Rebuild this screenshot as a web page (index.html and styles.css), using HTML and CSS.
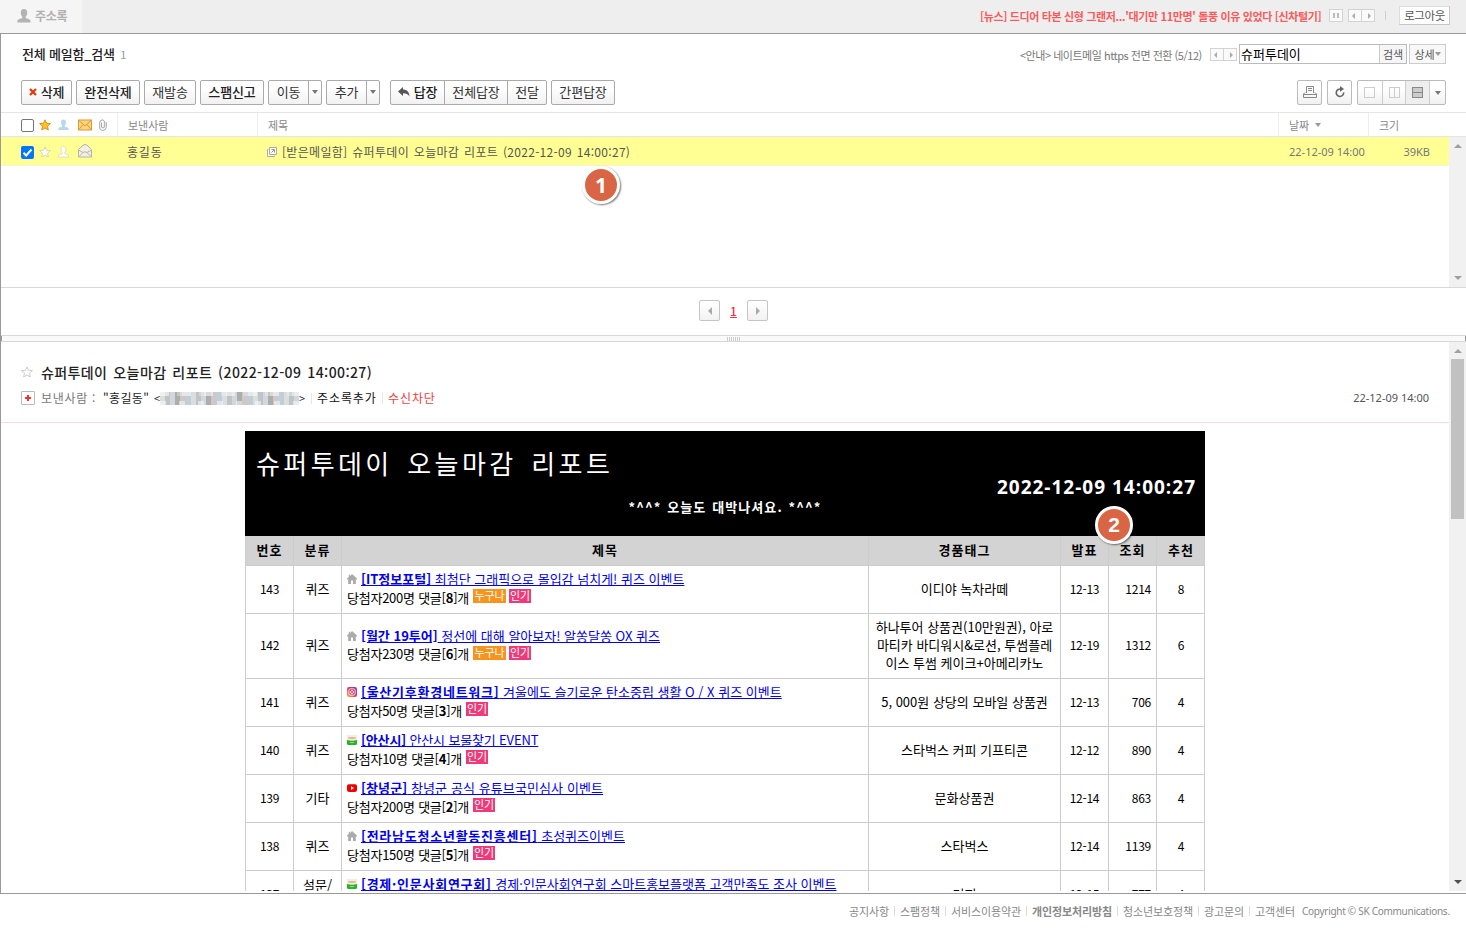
FILE: index.html
```html
<!DOCTYPE html>
<html lang="ko">
<head>
<meta charset="utf-8">
<title>메일</title>
<link rel="stylesheet" href="styles.css">
</head>
<body>
<svg class="defs" width="0" height="0">
  <symbol id="star" viewBox="0 0 12 12"><path d="M6 .8 7.5 4.2 11.4 4.6 8.5 7.2 9.3 11 6 9 2.7 11 3.5 7.2 .6 4.6 4.5 4.2Z"/></symbol>
  <symbol id="person" viewBox="0 0 14 14"><path d="M7 0C4.7 0 3.7 1.6 3.8 3.8 3.9 5.8 4.6 7 5.3 7.6V9C4 9.8.4 10 .4 12.2V13.5H13.6V12.2C13.6 10 10 9.8 8.7 9V7.6C9.4 7 10.1 5.8 10.2 3.8 10.3 1.6 9.3 0 7 0Z"/></symbol>
  <symbol id="house" viewBox="0 0 10 10"><path d="M5 0 10 4.6V5.4H8.8V10H6V6.6H4V10H1.2V5.4H0V4.6L1.8 3V.8H3V1.9Z" fill="#aaa"/></symbol>
  <symbol id="blog" viewBox="0 0 10 10"><rect width="10" height="10" rx="1.5" fill="#28b428"/><path d="M1 0H9Q10 0 10 1V5Q5 6.6 0 5V1Q0 0 1 0Z" fill="#f3eee2"/><path d="M1.5 3H8.5" stroke="#e2a678" stroke-width="1.5"/><path d="M3 7.5H7" stroke="#8ce08c"/></symbol>
  <symbol id="insta" viewBox="0 0 10 10"><linearGradient id="ig" x1="1" y1="0" x2="0" y2="1"><stop offset="0" stop-color="#7b3fc0"/><stop offset=".5" stop-color="#e0356a"/><stop offset="1" stop-color="#f8b648"/></linearGradient><rect width="10" height="10" rx="2" fill="url(#ig)"/><rect x="1.8" y="1.8" width="6.4" height="6.4" rx="1.8" fill="none" stroke="#fff" stroke-width=".8"/><circle cx="5" cy="5" r="1.5" fill="none" stroke="#fff" stroke-width=".8"/></symbol>
  <symbol id="tube" viewBox="0 0 10 10"><rect y="1.3" width="10" height="7.6" rx="1.8" fill="#f00000"/><path d="M4 3.3 7 5.1 4 6.9Z" fill="#fff"/></symbol>
</svg>

<header class="top">
  <div class="tab"><svg class="tab-icon"><use href="#person"/></svg>주소록</div>
  <div class="top-right">
    <span class="news">[뉴스] 드디어 타본 신형 그랜저...'대기만 11만명' 돌풍 이유 있었다 [신차털기]</span>
    <span class="mini pause"><i></i><i></i></span>
    <span class="mini pair"><i class="lt"></i><b></b><i class="rt"></i></span>
    <span class="top-sep"></span>
    <span class="logout">로그아웃</span>
  </div>
</header>

<main class="app">
  <div class="titlebar">
    <h1 class="box-title">전체 메일함_검색 <small>1</small></h1>
    <span class="notice">&lt;안내&gt; 네이트메일 https 전면 전환 (5/12)</span>
    <span class="mini pair notice-nav"><i class="lt"></i><b></b><i class="rt"></i></span>
    <div class="search"><span class="query">슈퍼투데이</span><span class="go">검색</span></div>
    <span class="detail">상세<i class="dn"></i></span>
  </div>

  <div class="toolbar">
    <span class="btn w51 strong"><svg class="x-icon" viewBox="0 0 8 8"><path d="M1 1 7 7M7 1 1 7"/></svg>삭제</span>
    <span class="btn w64 strong">완전삭제</span>
    <span class="btn w52">재발송</span>
    <span class="btn w64 strong">스팸신고</span>
    <span class="group"><span class="w40">이동</span><span class="w14"><i class="dn"></i></span></span>
    <span class="group add"><span class="w40">추가</span><span class="w14"><i class="dn"></i></span></span>
    <span class="group"><span class="w54 strong"><svg class="reply-icon" viewBox="0 0 12 10"><path d="M5 0V2.6C9 2.6 11.2 5 11.5 9.5 10 7 8 6.2 5 6.3V9L0 4.5Z"/></svg>답장</span><span class="w63">전체답장</span><span class="w39">전달</span></span>
    <span class="btn w64">간편답장</span>
    <span class="tools">
      <span class="btn tool"><svg width="14" height="12" viewBox="0 0 14 12" fill="none" stroke="#888"><path d="M3.5 7V.5H10.5V7M5 2.5H9M5 4.5H9"/><path d="M2 6.5.5 8V11.5H13.5V8L12 6.5M.5 8.5H13.5"/></svg></span>
      <span class="btn tool"><svg width="10" height="12" viewBox="0 0 10 12"><path d="M8.6 6.3A3.7 3.7 0 1 1 6.2 3.3" fill="none" stroke="#666" stroke-width="1.6"/><path d="M5 0 9 3 5 5.8Z" fill="#666"/></svg></span>
      <span class="group views"><span><i class="v1"></i></span><span><i class="v1 v2"></i></span><span class="on"><i class="v1 v3"></i></span><span class="last"><i class="dn"></i></span></span>
    </span>
  </div>

  <section class="list">
    <div class="list-head">
      <div class="marks"><i class="check"></i><svg class="m-star gold"><use href="#star"/></svg><svg class="m-person blue"><use href="#person"/></svg><svg class="m-mail" viewBox="0 0 14 12"><rect x=".5" y="1" width="13" height="10" fill="#ffd57a" stroke="#d59a3a"/><path d="M1 1.5 7 7 13 1.5M1 10.5 5 5.5M13 10.5 9 5.5" fill="none" stroke="#d59a3a"/></svg><svg class="m-clip" viewBox="0 0 8 12"><path d="M2.5 3.5V8.3Q4 9.6 5.3 8.3V2Q4-.2 2 1.5 .6 2 .7 4V9Q1 11.3 3.8 11.4 7 11.3 7.2 8.5V3" fill="none" stroke="#999" stroke-width=".9"/></svg></div>
      <div class="c-from">보낸사람</div><div class="c-subj">제목</div><div class="c-date">날짜<i class="dn"></i></div><div class="c-size">크기</div>
    </div>
    <div class="list-body">
      <div class="rows">
        <div class="mail-row">
          <div class="marks"><i class="check checked"><svg viewBox="0 0 13 13"><path d="M2.5 6.8 5.2 9.5 10.5 3.5" fill="none" stroke="#fff" stroke-width="2"/></svg></i><svg class="m-star pale"><use href="#star"/></svg><svg class="m-person pale"><use href="#person"/></svg><svg class="m-mail open" viewBox="0 0 14 14"><path d="M.5 5.5 5 1.2Q7-.2 9 1.2L13.5 5.5V13H.5Z" fill="#f1f1e8" stroke="#b5b5a5"/><path d="M1 12.5 5 8.5Q7 7 9 8.5L13 12.5M1 6.3 5 8.5M13 6.3 9 8.5" fill="none" stroke="#b5b5a5"/></svg></div>
          <div class="r-from">홍길동</div>
          <svg class="pop" viewBox="0 0 10 10"><path d="M2.5.5H9.5V7.5H2.5ZM1.5 2.5H.5V9.5H7.5V8.5" fill="#fff" stroke="#aaa"/><path d="M4.5 5.5 7 3M4.5 2.5H7.5V5.5" fill="none" stroke="#999"/></svg>
          <div class="r-subj">[받은메일함] 슈퍼투데이 오늘마감 리포트 (2022-12-09 14:00:27)</div>
          <div class="r-date">22-12-09 14:00</div><div class="r-size">39KB</div>
        </div>
      </div>
      <div class="scroll"><i class="up"></i><i class="dn"></i></div>
    </div>
    <div class="pager"><span class="pg"><i class="lt"></i></span><span class="pg-now">1</span><span class="pg"><i class="rt"></i></span></div>
    <div class="splitter"><i></i></div>
  </section>

  <section class="reader">
    <div class="message">
      <div class="m-head">
        <div class="m-title"><svg class="m-star outline"><use href="#star"/></svg><h2>슈퍼투데이 오늘마감 리포트 (2022-12-09 14:00:27)</h2></div>
        <div class="m-meta"><span class="plus"></span><span class="lab">보낸사람 :</span><span class="who">"홍길동"</span><span class="addr">&lt;<span class="mask"></span>&gt;</span><span class="bar"></span><span class="book">주소록추가</span><span class="bar"></span><span class="block">수신차단</span><time>22-12-09 14:00</time></div>
      </div>
      <div class="report">
        <div class="banner"><h3>슈퍼투데이 오늘마감 리포트</h3><p class="stamp">2022-12-09 14:00:27</p><p class="cheer">*^^* 오늘도 대박나셔요. *^^*</p></div>
        <div class="tr th"><div>번호</div><div>분류</div><div>제목</div><div>경품태그</div><div>발표</div><div>조회</div><div>추천</div></div>
        <div class="tr"><div>143</div><div class="k">퀴즈</div><div class="ti"><p><svg><use href="#house"/></svg><a><b>[IT정보포털]</b> 최첨단 그래픽으로 몰입감 넘치게! 퀴즈 이벤트</a></p><p class="sub">당첨자200명 댓글[<b>8</b>]개<em class="any">누구나</em><em>인기</em></p></div><div class="k">이디야 녹차라떼</div><div>12-13</div><div class="n">1214</div><div>8</div></div>
        <div class="tr tall"><div>142</div><div class="k">퀴즈</div><div class="ti"><p><svg><use href="#house"/></svg><a><b>[월간 19투어]</b> 정선에 대해 알아보자! 알쏭달쏭 OX 퀴즈</a></p><p class="sub">당첨자230명 댓글[<b>6</b>]개<em class="any">누구나</em><em>인기</em></p></div><div class="k three">하나투어 상품권(10만원권), 아로<br>마티카 바디워시&amp;로션, 투썸플레<br>이스 투썸 케이크+아메리카노</div><div>12-19</div><div class="n">1312</div><div>6</div></div>
        <div class="tr"><div>141</div><div class="k">퀴즈</div><div class="ti"><p><svg><use href="#insta"/></svg><a><b class="wide">[울산기후환경네트워크]</b> 겨울에도 슬기로운 탄소중립 생활 O / X 퀴즈 이벤트</a></p><p class="sub">당첨자50명 댓글[<b>3</b>]개<em>인기</em></p></div><div class="k">5, 000원 상당의 모바일 상품권</div><div>12-13</div><div class="n">706</div><div>4</div></div>
        <div class="tr"><div>140</div><div class="k">퀴즈</div><div class="ti"><p><svg><use href="#blog"/></svg><a class="snug"><b>[안산시]</b> 안산시 보물찾기 EVENT</a></p><p class="sub">당첨자10명 댓글[<b>4</b>]개<em>인기</em></p></div><div class="k">스타벅스 커피 기프티콘</div><div>12-12</div><div class="n">890</div><div>4</div></div>
        <div class="tr"><div>139</div><div class="k">기타</div><div class="ti"><p><svg><use href="#tube"/></svg><a class="loose"><b>[창녕군]</b> 창녕군 공식 유튜브국민심사 이벤트</a></p><p class="sub">당첨자200명 댓글[<b>2</b>]개<em>인기</em></p></div><div class="k">문화상품권</div><div>12-14</div><div class="n">863</div><div>4</div></div>
        <div class="tr"><div>138</div><div class="k">퀴즈</div><div class="ti"><p><svg><use href="#house"/></svg><a><b class="wide">[전라남도청소년활동진흥센터]</b> 초성퀴즈이벤트</a></p><p class="sub">당첨자150명 댓글[<b>5</b>]개<em>인기</em></p></div><div class="k">스타벅스</div><div>12-14</div><div class="n">1139</div><div>4</div></div>
        <div class="tr"><div>137</div><div class="k kind2">설문/</div><div class="ti"><p><svg><use href="#blog"/></svg><a><b class="wide">[경제·인문사회연구회]</b> 경제·인문사회연구회 스마트홍보플랫폼 고객만족도 조사 이벤트</a></p><p class="sub"></p></div><div class="k">커피</div><div>12-15</div><div class="n">777</div><div>4</div></div>
      </div>
    </div>
    <div class="scroll tallbar"><i class="up"></i><b class="thumb"></b><i class="dn"></i></div>
  </section>
  <span class="callout one">1</span>
  <span class="callout two">2</span>
</main>

<footer class="foot"><span>공지사항</span><i></i><span>스팸정책</span><i></i><span>서비스이용약관</span><i></i><b>개인정보처리방침</b><i></i><span>청소년보호정책</span><i></i><span>광고문의</span><i></i><span>고객센터</span><span class="copy">Copyright © SK Communications.</span></footer>
</body>
</html>
```
FILE: styles.css
```css
* { box-sizing: border-box; }
body {
  margin: 0; width: 1466px; height: 929px; overflow: hidden; background: #fff;
  font: 12px/16px "Noto Sans CJK KR", sans-serif; color: #333;
}
h1, h2, h3, p { margin: 0; font-weight: 400; }
i, em { font-style: normal; }
.defs { position: absolute; }
span, div { white-space: nowrap; }

/* arrows */
.dn, .up, .lt, .rt { display: block; width: 0; height: 0; border: 3px solid transparent; flex: none; color: #777; }
.dn { border-top: 4px solid currentColor; border-bottom: 0; }
.up { border-bottom: 4px solid currentColor; border-top: 0; }
.lt { border-right: 4px solid currentColor; border-left: 0; }
.rt { border-left: 4px solid currentColor; border-right: 0; }

/* top bar */
.top { height: 34px; background: #eee; border-bottom: 1px solid #999; display: flex; justify-content: space-between; }
.tab { width: 82px; height: 33px; background: #f5f5f5; display: flex; align-items: center; padding: 0 0 2px 17px; gap: 4px; font-weight: 700; color: #b0b0b0; letter-spacing: -.3px; }
.tab-icon { width: 14px; height: 14px; fill: #b3b3b3; }
.top-right { display: flex; align-items: center; padding: 0 16px 2px 0; }
.news { font-size: 11px; font-weight: 700; color: #f85c5c; width: 341px; letter-spacing: -.36px; margin-right: 8px; }
.mini { display: flex; align-items: center; justify-content: center; height: 13px; border: 1px solid #d3d3d3; background: #fafafa; }
.pause { width: 14px; gap: 2px; margin-right: 5px; }
.pause i { width: 2px; height: 5px; background: #bbb; }
.pair { width: 27px; justify-content: space-around; }
.pair b { width: 1px; height: 11px; background: #d3d3d3; }
.pair i { color: #aaa; border-width: 3px; }
.pair .lt { border-left-width: 0; }
.pair .rt { border-right-width: 0; }
.top-sep { width: 1px; height: 9px; background: #d0d0d0; margin: 0 13px 0 10px; }
.logout { width: 51px; height: 19px; line-height: 17px; border: 1px solid #ddd; border-right-color: #c5c5c5; border-bottom-color: #c5c5c5; background: #fff; font-size: 11.5px; letter-spacing: -.4px; text-align: center; color: #555; }

/* mailbox header */
.app { height: 860px; border-left: 1px solid #999; border-bottom: 1px solid #999; position: relative; }
.titlebar { height: 46px; display: flex; padding: 10px 20px 0 21px; }
.box-title { font-size: 13px; line-height: 20px; font-weight: 500; color: #222; margin-right: auto; letter-spacing: -.2px; }
.box-title small { font-size: 11px; font-weight: 400; color: #999; margin-left: 2px; }
.notice { font-size: 11px; line-height: 23px; color: #777; width: 182px; letter-spacing: -.48px; margin-right: 8px; }
.notice-nav { margin: 4px 2px 0 0; }
.search { display: flex; width: 168px; height: 20px; border: 1px solid #bbb; margin-right: 2px; line-height: 18px; }
.query { width: 141px; padding-left: 1px; color: #000; font-size: 13px; line-height: 18px; border-right: 1px solid #ccc; }
.go { width: 26px; text-align: center; background: #f6f6f6; font-size: 11px; color: #555; }
.detail { width: 37px; height: 20px; border: 1px solid #ccc; background: #f8f8f8; display: flex; align-items: center; justify-content: center; font-size: 11px; color: #555; }
.detail i { color: #999; border-width: 4px 3px 0; }

/* toolbar */
.toolbar { height: 32px; padding: 0 20px 7px; display: flex; gap: 4px; font-size: 13px; letter-spacing: -.1px; color: #333; }
.btn, .group { height: 25px; border: 1px solid #aaa; border-radius: 2px; background: linear-gradient(#fff 30%, #f1f1f1); display: flex; align-items: center; justify-content: center; padding-bottom: 1px; }
.group { padding-bottom: 0; }
.group > span { height: 23px; display: flex; align-items: center; justify-content: center; border-left: 1px solid #aaa; padding-bottom: 1px; }
.group > span:first-child { border-left: 0; }
.strong { font-weight: 500; color: #222; }
.w51 { width: 51px; } .w52 { width: 52px; } .w64 { width: 64px; }
.group .w40 { width: 39px; } .group .w14 { width: 13px; }
.group .w54 { width: 53px; } .group .w63 { width: 63px; } .group .w39 { width: 39px; }
.add { margin-right: 6px; }
.x-icon { width: 8px; height: 8px; stroke: #e8340c; stroke-width: 2.2; fill: none; margin-right: 4px; }
.reply-icon { width: 12px; height: 10px; fill: #555; margin-right: 4px; }
.tools { display: flex; gap: 5px; margin-left: auto; }
.tool { width: 25px; border-color: #bbb; }
.views { border-color: #bbb; width: 89px; }
.views > span { width: 24px; border-color: #ccc; padding: 0; }
.views > .last { width: 16px; }
.views .on { background: #eee; }
.v1 { display: block; width: 11px; height: 11px; border: 1px solid #ccc; }
.v2 { background: linear-gradient(90deg, transparent 4px, #ccc 4px 5px, transparent 5px); }
.v3 { border-color: #888; background: linear-gradient(#ccc 4px, #888 4px 5px, #ccc 5px); }

/* message list */
.list-head { height: 25px; border-top: 1px solid #e5e5e5; border-bottom: 1px solid #e5e5e5; display: grid; grid-template-columns: 116px 140px 1021px 90px 98px; font-size: 11px; line-height: 24px; color: #888; }
.list-head > div + div { border-left: 1px solid #eee; padding-left: 10px; }
.marks { display: flex; align-items: center; padding-left: 20px; width: 116px; flex: none; }
.list-head .c-date { display: flex; align-items: center; gap: 6px; }
.c-date .dn { color: #999; border-width: 4px 3px 0; }
.check { width: 13px; height: 13px; border: 1px solid #767676; border-radius: 2px; background: #fff; margin-right: 5px; flex: none; }
.checked { background: #0075ff; border: 0; }
.checked svg { display: block; }
.m-star { width: 12px; height: 12px; margin-right: 7px; flex: none; }
.gold { fill: #ffc02a; stroke: #d98a10; stroke-width: .9; }
.m-person { width: 11px; height: 12px; margin-right: 9px; flex: none; }
.blue { fill: #b9d9e6; }
.pale { fill: #fff; stroke: #d2d2ae; stroke-width: .9; }
.m-mail { width: 14px; height: 12px; margin-right: 7px; flex: none; }
.open { height: 14px; margin-bottom: 2px; }
.m-clip { width: 8px; height: 12px; }
.list-body { height: 151px; border-bottom: 1px solid #d8d8d8; display: flex; }
.rows { width: 1448px; }
.mail-row { height: 29px; background: #ffff94; border-bottom: 1px solid #f4f4d8; display: flex; align-items: center; padding-top: 2px; color: #666; }
.r-from { width: 150px; padding-left: 10px; letter-spacing: .8px; color: #555; }
.pop { width: 10px; height: 10px; margin: 0 5px 0 0; }
.r-subj { width: 1007px; letter-spacing: .3px; word-spacing: 1.2px; color: #555; }
.r-date { font-family: "Noto Sans", sans-serif; font-size: 11px; width: 76px; color: #777; }
.r-size { font-family: "Noto Sans", sans-serif; font-size: 11px; width: 65px; text-align: right; color: #777; }
.scroll { width: 17px; background: #f1f1f1; display: flex; flex-direction: column; justify-content: space-between; align-items: center; padding: 7px 0; color: #a0a0a0; }
.scroll i { color: #a0a0a0; border-left-width: 4px; border-right-width: 4px; }
.pager { height: 47px; padding-top: 12px; display: flex; justify-content: center; }
.pg { width: 21px; height: 21px; border: 1px solid #c5c5c5; border-radius: 2px; background: linear-gradient(#fff, #f2f2f2); display: flex; align-items: center; justify-content: center; }
.pg i { color: #aaa; border-width: 4px; }
.pg .lt { border-left: 0; } .pg .rt { border-right: 0; }
.pg-now { width: 27px; text-align: center; line-height: 22px; color: #f0304a; text-decoration: underline; font-weight: 500; }
.splitter { height: 7px; border: 1px solid #d8d8d8; border-width: 1px 0; background: #fafafa; display: flex; justify-content: center; align-items: center; box-shadow: inset 1px 0 #999, inset -1px 0 #999; }
.splitter i { width: 13px; height: 4px; background: repeating-linear-gradient(90deg, #ccc 0 1px, transparent 1px 2px); }

/* reading pane */
.reader { height: 549px; display: flex; overflow: hidden; }
.message { width: 1448px; overflow: hidden; }
.m-head { height: 81px; border-bottom: 1px solid #f8dcdc; padding: 20px 20px 0; }
.m-title { display: flex; align-items: center; height: 20px; }
.m-title h2 { font-size: 14px; line-height: 20px; font-weight: 500; letter-spacing: .4px; word-spacing: 1.6px; color: #222; margin-left: 1px; }
.outline { fill: #fff; stroke: #ccc; }
.m-meta { display: flex; align-items: center; height: 16px; margin-top: 8px; }
.plus { width: 14px; height: 14px; border: 1px solid #bbb; border-radius: 1px; background: linear-gradient(#e33, #e33) center / 6px 2px no-repeat, linear-gradient(#e33, #e33) center / 2px 6px no-repeat; }
.lab { width: 62px; margin-left: 6px; letter-spacing: .7px; color: #777; }
.who { width: 51px; letter-spacing: .35px; color: #222; }
.addr { display: flex; align-items: center; width: 151px; font-size: 11px; }
.mask {
  width: 139px; height: 13px; filter: blur(.7px);
  background:
    repeating-linear-gradient(90deg, rgba(255,255,255,.55) 0 9px, transparent 9px 17px, rgba(255,255,255,.3) 17px 22px) 0 0 / 100% 4px no-repeat,
    repeating-linear-gradient(90deg, rgba(255,255,255,.5) 0 6px, transparent 6px 19px) 0 9px / 100% 4px no-repeat,
    repeating-linear-gradient(90deg, #ddd 0 5px, #bcc6c9 5px 10px, #d5d5dd 10px 15px, #a9b0ac 15px 20px, #d3c6cb 20px 25px, #c0ced8 25px 31px);
}
.bar { width: 1px; height: 11px; background: #e5e5e5; margin: 0 5px 0 6px; }
.book { width: 59px; color: #111; letter-spacing: .9px; }
.block { color: #f04040; letter-spacing: .9px; }
.m-meta time { margin-left: auto; font: 11px/16px "Noto Sans", sans-serif; color: #555; }
.report { width: 960px; margin: 8px 0 0 244px; color: #000; }
.banner { height: 105px; background: #000; color: #fff; display: grid; grid-template-rows: 33px 22px 18px; align-content: start; padding-top: 12px; }
.banner h3 { font-size: 26px; line-height: 39px; font-weight: 400; letter-spacing: 3.4px; word-spacing: 4px; padding-left: 11px; }
.stamp { font: 700 19px/22px "Open Sans", sans-serif; text-align: right; padding-right: 9px; letter-spacing: 1px; }
.cheer { font-size: 13px; line-height: 17px; font-weight: 700; text-align: center; letter-spacing: 1.1px; word-spacing: 1px; }
.tr { display: grid; grid-template-columns: 48px 48px 527px 192px 48px 48px 49px; height: 48px; border-bottom: 1px solid #ccc; border-right: 1px solid #ccc; }
.tr > div { border-left: 1px solid #ccc; display: flex; align-items: center; justify-content: center; letter-spacing: -.25px; padding-bottom: 2px; }
.th { height: 30px; background: #d3d3d3; font-weight: 700; font-size: 13px; }
.th > div { letter-spacing: 1px; }
.tall { height: 65px; }
.tr > .k { font-size: 13px; letter-spacing: 0; text-align: center; }
.tr > .three { line-height: 18px; letter-spacing: 0; }
.tr > .kind2 { line-height: 18px; align-items: flex-start; padding-top: 5px; }
.tr > .ti { flex-direction: column; align-items: flex-start; padding: 0 0 3px 5px; }
.ti p { display: flex; align-items: center; height: 19px; font-size: 13px; letter-spacing: 0; }
.ti p svg { width: 10px; height: 10px; margin-right: 4px; flex: none; }
.ti a { color: #00e; text-decoration: underline; line-height: 18px; }
.ti .wide { letter-spacing: .75px; }
.ti .snug { letter-spacing: -.15px; }
.ti .loose { letter-spacing: .1px; }
.ti .sub { letter-spacing: -.25px; height: 18px; }
.ti em { background: #ee3a78; color: #fff; height: 14px; width: 22px; line-height: 13px; font-size: 11px; text-align: center; margin: -3px 0 0 4px; letter-spacing: -.2px; }
.ti .any { background: #f7941e; width: 33px; }
.ti .any + em { margin-left: 3px; }
.tr > .n { justify-content: flex-end; padding-right: 5px; }
.scroll.tallbar { justify-content: flex-start; height: 549px; }
.thumb { width: 13px; height: 160px; background: #c1c1c1; margin: 6px 0 auto; }
.tallbar .dn { color: #505050; }

.callout { position: absolute; width: 38px; height: 38px; border: 3px solid #fff; border-radius: 50%; background: #d96545; box-shadow: 1px 1px 2px rgba(0,0,0,.55); color: #fff; font: 700 21px/32px "Noto Sans", sans-serif; text-align: center; }
.one { left: 581px; top: 132px; }
.two { left: 1094px; top: 472px; font-family: "Liberation Sans", sans-serif; }

/* footer */
.foot { display: flex; align-items: center; justify-content: flex-end; height: 33px; padding-right: 16px; font-size: 11px; color: #888; letter-spacing: -.12px; }
.foot i { width: 1px; height: 10px; background: #ddd; margin: 0 5px; }
.foot .copy { margin-left: 7px; width: 148px; font-family: "Noto Sans", sans-serif; font-size: 10px; letter-spacing: -.28px; }
```
